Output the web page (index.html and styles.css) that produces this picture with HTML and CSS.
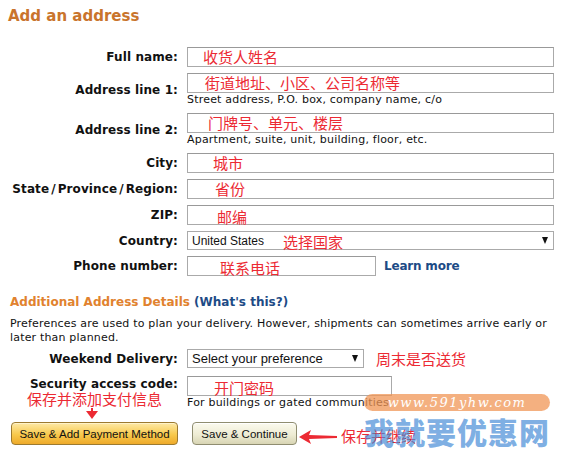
FILE: index.html
```html
<!DOCTYPE html>
<html>
<head>
<meta charset="utf-8">
<link rel="stylesheet" href="styles.css">
</head>
<body>
<div class="page">
  <h1 class="title">Add an address</h1>
  <div class="form">
    <div class="label">Full name:</div>
    <div class="field"><div class="box"><span class="note o16">收货人姓名</span></div></div>

    <div class="label">Address line 1:</div>
    <div class="field"><div class="box"><span class="note o18">街道地址、小区、公司名称等</span></div><div class="hint">Street address, P.O. box, company name, c/o</div></div>

    <div class="label">Address line 2:</div>
    <div class="field"><div class="box"><span class="note o21">门牌号、单元、楼层</span></div><div class="hint">Apartment, suite, unit, building, floor, etc.</div></div>

    <div class="label">City:</div>
    <div class="field"><div class="box"><span class="note o26">城市</span></div></div>

    <div class="label">State<span class="sl">/</span>Province<span class="sl">/</span>Region:</div>
    <div class="field"><div class="box"><span class="note o28">省份</span></div></div>

    <div class="label">ZIP:</div>
    <div class="field"><div class="box"><span class="note o30 low">邮编</span></div></div>

    <div class="label">Country:</div>
    <div class="field"><div class="select"><span class="sel-text">United States</span><span class="note o-country">选择国家</span><span class="caret"></span></div></div>

    <div class="label">Phone number:</div>
    <div class="field inline"><div class="box phone"><span class="note o33 low">联系电话</span></div><a class="link learn">Learn more</a></div>
  </div>

  <h2 class="section">Additional Address Details <span class="paren">(<a class="link">What's this?</a>)</span></h2>
  <p class="desc">Preferences are used to plan your delivery. However, shipments can sometimes arrive early or later than planned.</p>

  <div class="form form2">
    <div class="label">Weekend Delivery:</div>
    <div class="field inline"><div class="select weekend"><span class="sel-text big">Select your preference</span><span class="caret"></span></div><span class="note side">周末是否送货</span></div>

    <div class="label label-top">Security access code:</div>
    <div class="field"><div class="box security"><span class="note o27 low">开门密码</span></div><div class="hint">For buildings or gated communities</div></div>
  </div>

  <div class="annot-row">
    <span class="note annot">保存并添加支付信息</span>
    <svg class="down-arrow" width="12" height="12" viewBox="0 0 12 12"><rect x="5" y="0" width="2" height="3" fill="#ec2a33"/><polygon points="0,3 12,3 6,11" fill="#ec2a33"/></svg>
  </div>

  <div class="buttons">
    <div class="btn btn-primary">Save &amp; Add Payment Method</div>
    <div class="btn btn-secondary">Save &amp; Continue</div>
    <svg class="left-arrow" width="38" height="14" viewBox="0 0 38 14"><polygon points="0,7 12,0 10,5 38,6 38,8 10,9 12,14" fill="#ec2a33"/></svg>
    <span class="note cont">保存并继续</span>
  </div>

  <div class="watermark">
    <div class="wm-pill">www.591yhw.com</div>
    <div class="wm-text">我就要优惠网</div>
  </div>
</div>
</body>
</html>
```

FILE: styles.css
```css
html, body {
  margin: 0;
  padding: 0;
  background: #fff;
}
body {
  font-family: "DejaVu Sans", Verdana, sans-serif;
  color: #111;
  width: 563px;
  height: 460px;
  overflow: hidden;
}
.page {
  position: relative;
  width: 563px;
  height: 460px;
}
.title {
  margin: 0;
  padding: 6px 0 0 8px;
  font-size: 15px;
  font-weight: bold;
  color: #c9742c;
  line-height: 20px;
  height: 47px;
  box-sizing: border-box;
}
.form {
  display: grid;
  grid-template-columns: 178px 367px;
  column-gap: 9px;
  row-gap: 6px;
  align-items: center;
}
.label {
  text-align: right;
  font-weight: bold;
  font-size: 12px;
  color: #111;
  white-space: nowrap;
  letter-spacing: 0.1px;
}
.label-top {
  align-self: start;
  padding-top: 1px;
}
.sl {
  margin: 0 2px;
}
.field {
  display: flex;
  flex-direction: column;
}
.field.inline {
  flex-direction: row;
  align-items: center;
}
.box {
  height: 20px;
  box-sizing: border-box;
  border: 1px solid #aaa;
  border-top-color: #999;
  display: flex;
  align-items: center;
  overflow: visible;
  background: #fff;
}
.box.phone {
  width: 189px;
}
.box.security {
  width: 205px;
}
.hint {
  font-size: 11px;
  letter-spacing: 0.2px;
  line-height: 14px;
  height: 14px;
  color: #111;
  white-space: nowrap;
}
.note {
  font-family: "Noto Sans CJK SC", sans-serif;
  color: #ec2a33;
  font-size: 15px;
  line-height: 18px;
  white-space: nowrap;
}
.low { margin-top: 3px; }
.o16 { margin-left: 15px; }
.o18 { margin-left: 17px; }
.o21 { margin-left: 20px; }
.o26 { margin-left: 25px; }
.o27 { margin-left: 26px; }
.o28 { margin-left: 27px; }
.o30 { margin-left: 29px; }
.o33 { margin-left: 32px; }
.select {
  height: 19px;
  box-sizing: border-box;
  border: 1px solid #aaa;
  display: flex;
  align-items: center;
  background: #fff;
  position: relative;
}
.sel-text {
  font-family: "Liberation Sans", Arial, sans-serif;
  font-size: 12px;
  color: #111;
  padding-left: 4px;
  width: 87px;
  white-space: nowrap;
}
.sel-text.big {
  font-size: 13px;
  width: auto;
}
.o-country {
  margin-left: 4px;
  margin-top: 3px;
}
.caret {
  margin-left: auto;
  margin-right: 5px;
  width: 0;
  height: 0;
  border-left: 3.5px solid transparent;
  border-right: 3.5px solid transparent;
  border-top: 7px solid #111;
}
.select.weekend {
  width: 177px;
}
.side {
  margin-left: 12px;
}
.link {
  color: #1d4b86;
  font-weight: bold;
  text-decoration: none;
}
.learn {
  margin-left: 8px;
  font-size: 12px;
  letter-spacing: -0.2px;
}
.section {
  margin: 18px 0 0 10px;
  font-size: 12px;
  line-height: 16px;
  font-weight: bold;
  color: #e1822e;
}
.paren {
  color: #1d4b86;
}
.desc {
  margin: 7px 0 0 10px;
  width: 550px;
  font-size: 11px;
  letter-spacing: 0.18px;
  line-height: 14px;
  color: #111;
}
.form2 {
  margin-top: 4px;
  row-gap: 8px;
}
.annot-row {
  position: relative;
  height: 0;
}
.annot {
  position: absolute;
  left: 27px;
  top: -20px;
}
.down-arrow {
  position: absolute;
  left: 86px;
  top: -2px;
}
.buttons {
  display: flex;
  align-items: center;
  margin: 12px 0 0 11px;
  position: relative;
}
.btn {
  font-family: "Liberation Sans", Arial, sans-serif;
  font-size: 11.5px;
  color: #111;
  height: 23px;
  box-sizing: border-box;
  border-radius: 4px;
  display: flex;
  align-items: center;
  justify-content: center;
  white-space: nowrap;
}
.btn-primary {
  width: 167px;
  border: 1px solid #9c7a30;
  background: linear-gradient(#fde9a6, #f8c94c 55%, #eeaa2a);
  box-shadow: inset 0 1px 0 #fff3c8;
}
.btn-secondary {
  margin-left: 14px;
  width: 105px;
  border: 1px solid #8f8d70;
  background: linear-gradient(#fbfaee, #eeecd4 55%, #d8d5b4);
  box-shadow: inset 0 1px 0 #fff;
}
.left-arrow {
  margin-left: 2px;
  margin-top: 6px;
}
.cont {
  margin-left: 4px;
  margin-top: 5px;
}
.watermark {
  position: absolute;
  left: 364px;
  top: 394px;
  width: 186px;
  pointer-events: none;
}
.wm-pill {
  height: 17px;
  border-radius: 9px;
  background: rgba(240, 150, 85, 0.75);
  color: #fff;
  font-family: "DejaVu Serif", serif;
  font-style: italic;
  font-size: 13px;
  line-height: 17px;
  letter-spacing: 1.5px;
  text-align: center;
}
.wm-text {
  margin-top: 3px;
  font-family: "Noto Sans CJK SC", sans-serif;
  font-weight: 900;
  font-size: 30px;
  line-height: 34px;
  letter-spacing: 1px;
  color: rgba(70, 140, 215, 0.7);
  white-space: nowrap;
}
```
